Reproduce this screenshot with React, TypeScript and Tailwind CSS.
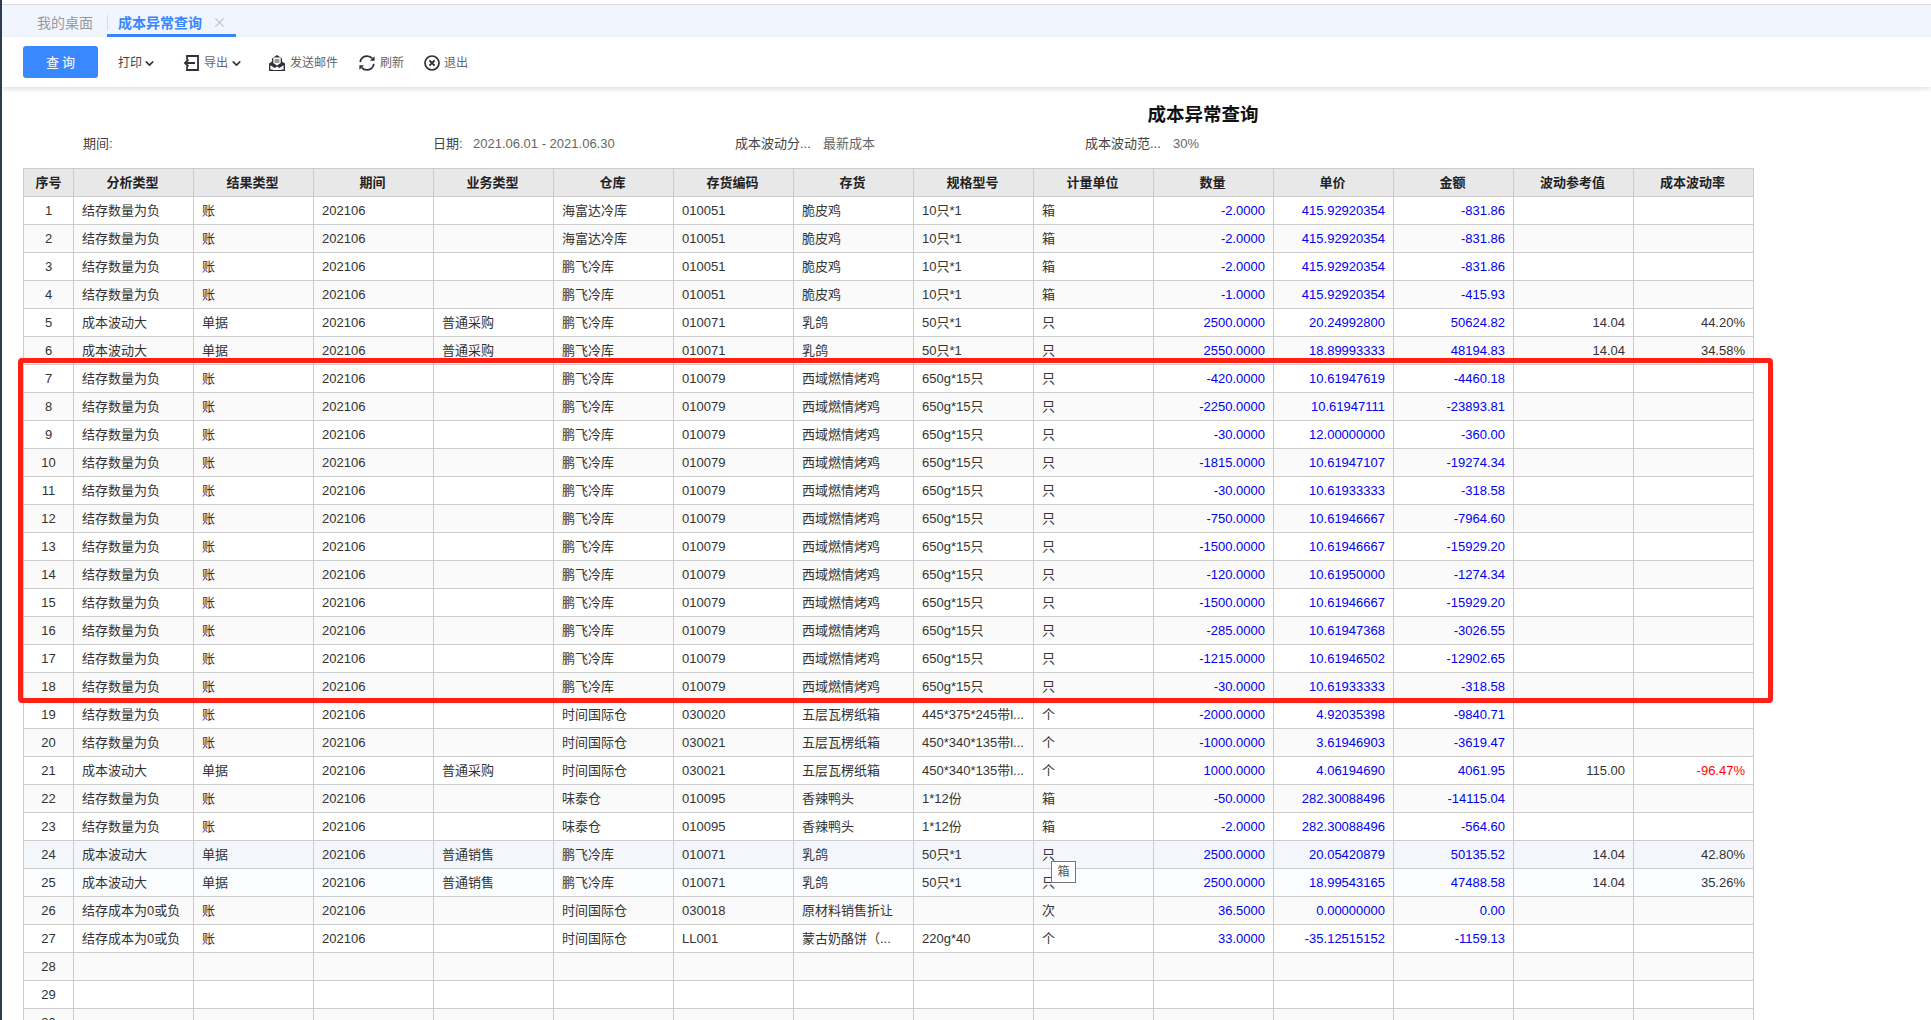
import { ChevronDown, X } from "lucide-react";

type Row = {
  kind: string;
  result: string;
  biz?: string;
  house: string;
  code: string;
  item: string;
  spec?: string;
  unit: string;
  qty: string;
  price: string;
  amount: string;
  ref?: string;
  rate?: string;
};

const neg = "结存数量为负";
const big = "成本波动大";
const zero = "结存成本为0或负";

function burn(qty: string, price: string, amount: string): Row {
  return { kind: neg, result: "账", house: "鹏飞冷库", code: "010079", item: "西域燃情烤鸡", spec: "650g*15只", unit: "只", qty, price, amount };
}

const rows: Row[] = [
  { kind: neg, result: "账", house: "海富达冷库", code: "010051", item: "脆皮鸡", spec: "10只*1", unit: "箱", qty: "-2.0000", price: "415.92920354", amount: "-831.86" },
  { kind: neg, result: "账", house: "海富达冷库", code: "010051", item: "脆皮鸡", spec: "10只*1", unit: "箱", qty: "-2.0000", price: "415.92920354", amount: "-831.86" },
  { kind: neg, result: "账", house: "鹏飞冷库", code: "010051", item: "脆皮鸡", spec: "10只*1", unit: "箱", qty: "-2.0000", price: "415.92920354", amount: "-831.86" },
  { kind: neg, result: "账", house: "鹏飞冷库", code: "010051", item: "脆皮鸡", spec: "10只*1", unit: "箱", qty: "-1.0000", price: "415.92920354", amount: "-415.93" },
  { kind: big, result: "单据", biz: "普通采购", house: "鹏飞冷库", code: "010071", item: "乳鸽", spec: "50只*1", unit: "只", qty: "2500.0000", price: "20.24992800", amount: "50624.82", ref: "14.04", rate: "44.20%" },
  { kind: big, result: "单据", biz: "普通采购", house: "鹏飞冷库", code: "010071", item: "乳鸽", spec: "50只*1", unit: "只", qty: "2550.0000", price: "18.89993333", amount: "48194.83", ref: "14.04", rate: "34.58%" },
  burn("-420.0000", "10.61947619", "-4460.18"),
  burn("-2250.0000", "10.61947111", "-23893.81"),
  burn("-30.0000", "12.00000000", "-360.00"),
  burn("-1815.0000", "10.61947107", "-19274.34"),
  burn("-30.0000", "10.61933333", "-318.58"),
  burn("-750.0000", "10.61946667", "-7964.60"),
  burn("-1500.0000", "10.61946667", "-15929.20"),
  burn("-120.0000", "10.61950000", "-1274.34"),
  burn("-1500.0000", "10.61946667", "-15929.20"),
  burn("-285.0000", "10.61947368", "-3026.55"),
  burn("-1215.0000", "10.61946502", "-12902.65"),
  burn("-30.0000", "10.61933333", "-318.58"),
  { kind: neg, result: "账", house: "时间国际仓", code: "030020", item: "五层瓦楞纸箱", spec: "445*375*245带l...", unit: "个", qty: "-2000.0000", price: "4.92035398", amount: "-9840.71" },
  { kind: neg, result: "账", house: "时间国际仓", code: "030021", item: "五层瓦楞纸箱", spec: "450*340*135带l...", unit: "个", qty: "-1000.0000", price: "3.61946903", amount: "-3619.47" },
  { kind: big, result: "单据", biz: "普通采购", house: "时间国际仓", code: "030021", item: "五层瓦楞纸箱", spec: "450*340*135带l...", unit: "个", qty: "1000.0000", price: "4.06194690", amount: "4061.95", ref: "115.00", rate: "-96.47%" },
  { kind: neg, result: "账", house: "味泰仓", code: "010095", item: "香辣鸭头", spec: "1*12份", unit: "箱", qty: "-50.0000", price: "282.30088496", amount: "-14115.04" },
  { kind: neg, result: "账", house: "味泰仓", code: "010095", item: "香辣鸭头", spec: "1*12份", unit: "箱", qty: "-2.0000", price: "282.30088496", amount: "-564.60" },
  { kind: big, result: "单据", biz: "普通销售", house: "鹏飞冷库", code: "010071", item: "乳鸽", spec: "50只*1", unit: "只", qty: "2500.0000", price: "20.05420879", amount: "50135.52", ref: "14.04", rate: "42.80%" },
  { kind: big, result: "单据", biz: "普通销售", house: "鹏飞冷库", code: "010071", item: "乳鸽", spec: "50只*1", unit: "只", qty: "2500.0000", price: "18.99543165", amount: "47488.58", ref: "14.04", rate: "35.26%" },
  { kind: zero, result: "账", house: "时间国际仓", code: "030018", item: "原材料销售折让", unit: "次", qty: "36.5000", price: "0.00000000", amount: "0.00" },
  { kind: zero, result: "账", house: "时间国际仓", code: "LL001", item: "蒙古奶酪饼（...", spec: "220g*40", unit: "个", qty: "33.0000", price: "-35.12515152", amount: "-1159.13" },
];

const headers = ["序号", "分析类型", "结果类型", "期间", "业务类型", "仓库", "存货编码", "存货", "规格型号", "计量单位", "数量", "单价", "金额", "波动参考值", "成本波动率"];

function ExportIcon() {
  return (
    <svg width="16" height="16" viewBox="0 0 16 16" fill="none" stroke="#2f2f3a" strokeWidth="1.8">
      <path d="M4 4.5V1h11v14H4v-3.5" />
      <path d="M12 8H1.5M5.5 4.5 2 8l3.5 3.5" />
    </svg>
  );
}

function MailIcon() {
  return (
    <svg width="16" height="16" viewBox="0 0 16 16">
      <path d="M8 0 13 3.5V6.6L16 8.6V16H0V8.6L3 6.6V3.5Z" fill="#33333d" />
      <path d="M4.3 2.6h7.4v5.5L8 10.6 4.3 8.1Z" fill="#fff" />
      <path d="M5.6 4.6h4.8v1H5.6zM5.6 6.6h4.8v1H5.6z" fill="#33333d" />
      <path d="M1.4 10.2 6 13.2 1.4 14.8ZM14.6 10.2 10 13.2l4.6 1.6ZM2.6 14.9 8 11.6l5.4 3.3Z" fill="#fff" />
    </svg>
  );
}

function RefreshIcon() {
  return (
    <svg width="16" height="16" viewBox="0 0 16 16" fill="none" stroke="#2f2f3a" strokeWidth="1.7">
      <path d="M1.2 7.2A6.9 6.9 0 0 1 13.2 3.4" />
      <path d="M14.8 8.8A6.9 6.9 0 0 1 2.8 12.6" />
      <path d="M15.6 1.2v4.6H11" fill="#2f2f3a" stroke="none" />
      <path d="M.4 14.8v-4.6H5" fill="#2f2f3a" stroke="none" />
    </svg>
  );
}

function ExitIcon() {
  return (
    <svg width="16" height="16" viewBox="0 0 16 16" fill="none" stroke="#2f2f3a">
      <circle cx="8" cy="8" r="7" strokeWidth="1.7" />
      <path d="m5.4 5.4 5.2 5.2m0-5.2-5.2 5.2" strokeWidth="2" />
    </svg>
  );
}

function rowBg(n: number) {
  if (n === 24) return "bg-[#f3f7fc]";
  if (n === 25) return "bg-[#fafcfe]";
  return n % 2 === 0 ? "bg-[#fafafa]" : "bg-white";
}

function Cell({ children }: { children?: React.ReactNode }) {
  return <td className="h-[28px] overflow-hidden whitespace-nowrap border border-[#ccc] px-[8px] text-left">{children}</td>;
}

function Num({ children, red, black }: { children?: React.ReactNode; red?: boolean; black?: boolean }) {
  const color = red ? "text-[#ff0000]" : black ? "text-[#333]" : "text-[#0000f0]";
  return <td className={`h-[28px] overflow-hidden whitespace-nowrap border border-[#ccc] px-[8px] text-right ${color}`}>{children}</td>;
}

export default function App() {
  return (
    <div className="flex h-[1020px] flex-col overflow-hidden border-l-2 border-[#2f3b4e] bg-white text-[13px] text-[#333] [font-family:'Liberation_Sans','Noto_Sans_CJK_SC',sans-serif]">
      <div className="mt-[4px] flex h-[33px] shrink-0 items-start border-t border-[#dcdcdc] bg-[#f0f5fe] pl-[35px]">
        <span className="mt-[8px] w-[70px] text-[14px] leading-[20px] text-[#999]">我的桌面</span>
        <div className="relative flex h-[32px] w-[129px] items-start border-b-[3px] border-[#3a86ff] pl-[11px]">
          <span className="absolute left-0 top-[10px] h-[15px] w-px bg-[#dcdcdc]" />
          <span className="mt-[8px] text-[14px] font-bold leading-[20px] text-[#3a86ff]">成本异常查询</span>
          <X size={15} strokeWidth={2} className="ml-[10px] mt-[10px] text-[#c8c8c8]" />
        </div>
      </div>

      <div className="z-10 flex h-[50px] shrink-0 items-center bg-white pl-[21px] pt-[2px] text-[12px] text-[#666] shadow-[0_2px_5px_rgba(0,0,0,0.13)]">
        <button className="-mt-[2px] h-[32px] w-[75px] rounded-[3px] bg-[#3a88fe] pl-[3px] pt-[2px] text-[13px] tracking-[3px] text-white">查询</button>
        <span className="ml-[20px] flex items-center gap-[1px] text-[#444]">
          打印
          <ChevronDown size={13} strokeWidth={3} className="text-[#333]" />
        </span>
        <span className="ml-[27px] flex items-center gap-[5px]">
          <ExportIcon />
          <span className="flex items-center gap-[2px]">
            导出
            <ChevronDown size={13} strokeWidth={3} className="text-[#333]" />
          </span>
        </span>
        <span className="ml-[26px] flex items-center gap-[5px]">
          <MailIcon />
          发送邮件
        </span>
        <span className="ml-[21px] flex items-center gap-[5px]">
          <RefreshIcon />
          刷新
        </span>
        <span className="ml-[20px] flex items-center gap-[4px]">
          <ExitIcon />
          退出
        </span>
      </div>

      <div className="flex-1 pl-[21px]">
        <h1 className="mt-[16px] w-[2360px] text-center text-[18.5px] font-bold leading-[24px] text-[#111]">成本异常查询</h1>
        <div className="mt-[7px] flex h-[20px] items-center pl-[60px] text-[#444]">
          <span className="w-[350px]">期间:</span>
          <span className="w-[40px]">日期:</span>
          <span className="w-[262px] text-[#666]">2021.06.01 - 2021.06.30</span>
          <span className="w-[88px]">成本波动分...</span>
          <span className="w-[262px] text-[#666]">最新成本</span>
          <span className="w-[88px]">成本波动范...</span>
          <span className="text-[#666]">30%</span>
        </div>

        <div className="relative mt-[14px] w-[1731px]">
          <table className="w-[1731px] table-fixed border-collapse">
            <colgroup>
              <col className="w-[50px]" />
              {headers.slice(1).map((h) => (
                <col key={h} className="w-[120px]" />
              ))}
            </colgroup>
            <thead>
              <tr className="bg-[#e8e8e8] text-[#222]">
                {headers.map((h, i) => (
                  <th key={h} className={i === 0 ? "h-[28px] border border-[#ccc] font-bold" : "h-[28px] border border-[#ccc] pr-[2px] font-bold"}>
                    {h}
                  </th>
                ))}
              </tr>
            </thead>
            <tbody>
              {rows.map((r, i) => (
                <tr key={i} className={rowBg(i + 1)}>
                  <td className="h-[28px] border border-[#ccc] text-center">{i + 1}</td>
                  <Cell>{r.kind}</Cell>
                  <Cell>{r.result}</Cell>
                  <Cell>202106</Cell>
                  <Cell>{r.biz}</Cell>
                  <Cell>{r.house}</Cell>
                  <Cell>{r.code}</Cell>
                  <Cell>{r.item}</Cell>
                  <Cell>{r.spec}</Cell>
                  <Cell>{r.unit}</Cell>
                  <Num>{r.qty}</Num>
                  <Num>{r.price}</Num>
                  <Num>{r.amount}</Num>
                  <Num black>{r.ref}</Num>
                  <Num black={!r.rate?.startsWith("-")} red={r.rate?.startsWith("-")}>
                    {r.rate}
                  </Num>
                </tr>
              ))}
              {[28, 29, 30].map((n) => (
                <tr key={n} className={rowBg(n)}>
                  <td className="h-[28px] border border-[#ccc] text-center">{n}</td>
                  {headers.slice(1).map((h) => (
                    <td key={h} className="border border-[#ccc]" />
                  ))}
                </tr>
              ))}
            </tbody>
          </table>

          {/* annotation drawn over the table */}
          <div className="pointer-events-none absolute left-[-5px] top-[190px] h-[345px] w-[1755px] rounded-[4px] border-[5px] border-[#ff2115]" />
          <div className="absolute left-[1028px] top-[693px] flex h-[22px] w-[25px] items-center justify-center border border-[#777] bg-white text-[12px] text-[#555]">箱</div>
        </div>
      </div>
    </div>
  );
}
